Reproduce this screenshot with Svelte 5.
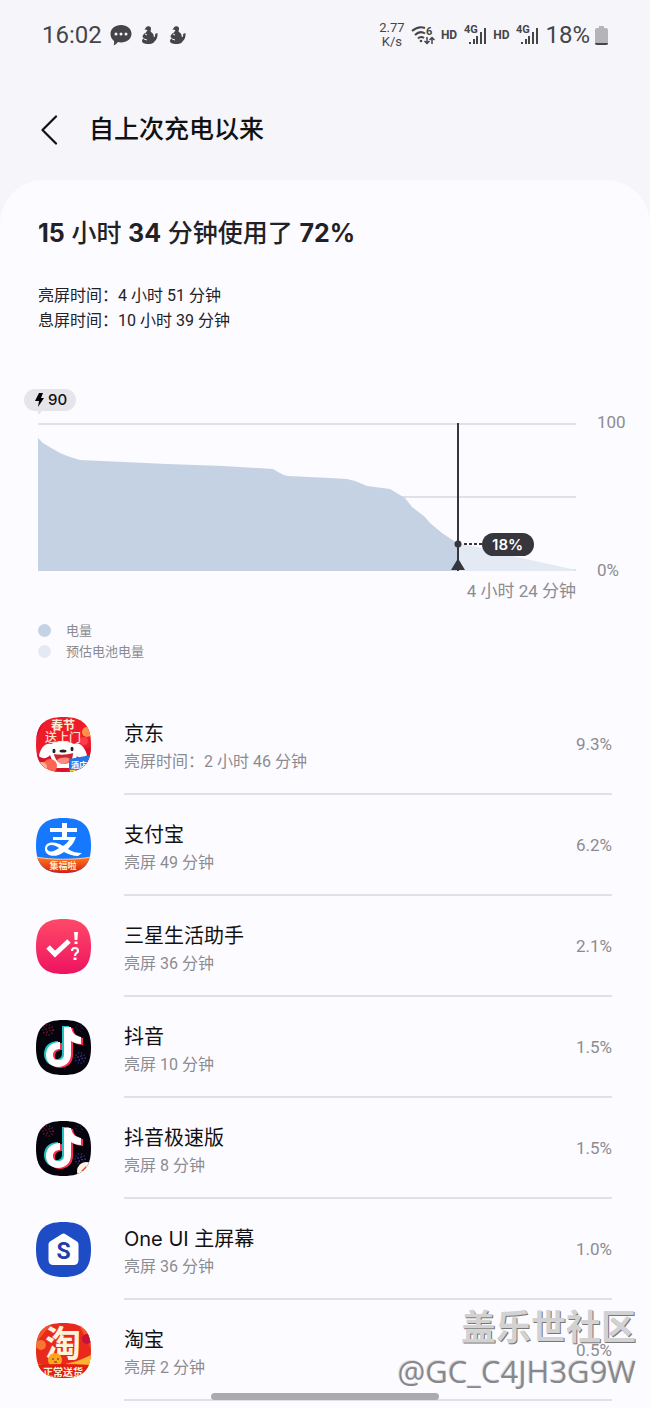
<script lang="ts">
  type App = { icon: string; name: string; detail: string; percent: string };

  const apps: App[] = [
    { icon: "jd", name: "京东", detail: "亮屏时间：2 小时 46 分钟", percent: "9.3%" },
    { icon: "alipay", name: "支付宝", detail: "亮屏 49 分钟", percent: "6.2%" },
    { icon: "assistant", name: "三星生活助手", detail: "亮屏 36 分钟", percent: "2.1%" },
    { icon: "douyin", name: "抖音", detail: "亮屏 10 分钟", percent: "1.5%" },
    { icon: "douyin-lite", name: "抖音极速版", detail: "亮屏 8 分钟", percent: "1.5%" },
    { icon: "home", name: "One UI 主屏幕", detail: "亮屏 36 分钟", percent: "1.0%" },
    { icon: "taobao", name: "淘宝", detail: "亮屏 2 分钟", percent: "0.5%" },
  ];

  const squircle = "M27.5 0C47 0 55 8 55 27.5S47 55 27.5 55 0 47 0 27.5 8 0 27.5 0z";
  const note =
    "M27 7h7c1 6 4 9 10 10v7c-4 0-7-1-10-3v13c0 8-6 13-13 13S9 42 9 35c0-8 6-13 14-13v7c-4 0-7 2-7 6 0 3 2 5 5 5 4 0 6-2 6-6z";
</script>

<svelte:head>
  <title>自上次充电以来</title>
</svelte:head>

{#snippet signal()}
  <svg class="signal" width="23" height="22" viewBox="0 0 23 22">
    <text x="0" y="9" font-size="11" font-weight="700">4G</text>
    <path d="M5 18h2v2H5zM9 15h2v5H9zM12 12h2v8h-2zM16 8h2v12h-2zM20 4h2v16h-2z" />
  </svg>
{/snippet}

{#snippet mascot()}
  <svg width="17" height="20" viewBox="0 0 17 20">
    <path
      d="M5 2.500C6 .5 10 .6 10 3.500c0 1.500-.6 2.300-.3 3.200C11.500 8 13 9 12.800 12.200c1.600-.5 1.600-2 1.200-3.200l2.500-1c.4 4-1 7-3 8.500C12.500 18.500 10 19 7 19c-3.500 0-6-1-6-3 0-1.400 1-2.200 2-2.700L1.500 12c0-2 1.500-3.500 3.500-4.500L6.500 5 3.500 4.500z"
    />
    <path d="M4 9l2 1M3 14l3 1" fill="none" stroke="#f5f5fa" />
  </svg>
{/snippet}

{#snippet appIcon(icon: string)}
  <svg class="app-icon" viewBox="0 0 55 55" aria-hidden="true">
    <defs>
      <clipPath id="clip-{icon}"><path d={squircle} /></clipPath>
      <linearGradient id="pink" x1="0" y1="0" x2="0" y2="1">
        <stop offset="0" stop-color="#ff4a68" />
        <stop offset="1" stop-color="#ee1360" />
      </linearGradient>
      <linearGradient id="orange" x1="0" y1="0" x2="0" y2="1">
        <stop offset="0" stop-color="#ff7a1c" />
        <stop offset="1" stop-color="#d91c10" />
      </linearGradient>
    </defs>
    <g clip-path="url(#clip-{icon})">
      {#if icon === "jd"}
        <rect width="55" height="55" fill="#ee1c2a" />
        <path d="M0 0h10L0 22zM55 30v25H0V38z" fill="#d9122c" />
        <circle cx="51" cy="15" r="5" fill="#ff9248" />
        <circle cx="48" cy="24" r="4" fill="#ff3b50" />
        <text x="27" y="13" text-anchor="middle" font-size="12" font-weight="700" fill="#ffe9cf">春节</text>
        <text x="27" y="25" text-anchor="middle" font-size="12" font-weight="500" fill="#ffe3cf">送上门</text>
        <path d="M15 27c6-3 17-3 23 0 5-3 11 3 13 11-3 4-8 4-10 1l-4 12H19l-5-13c-3 4-8 4-11 1 1-7 6-14 12-12z" fill="#fff" />
        <path d="M18 37c5 1 13 1 19-1 0 7-4 11-9 11s-9-4-10-10z" fill="#c9262d" />
        <path d="M21 43c4-3 10-3 13-1-2 6-10 7-13 1z" fill="#ff8a80" />
        <ellipse cx="18" cy="34" rx="1.500" ry="2.200" fill="#222" />
        <ellipse cx="36" cy="32" rx="1.500" ry="2.200" fill="#222" />
        <ellipse cx="27" cy="34" rx="3.500" ry="1.600" fill="#222" />
        <circle cx="14" cy="49" r="7" fill="#ff6550" />
        <circle cx="6" cy="50" r="5" fill="#ffb08a" />
        <path d="M33 42l22-4v17H33z" fill="#2577e8" />
        <path d="M34 53h8v2h-8z" fill="#ffd54a" />
        <text x="35" y="51" font-size="8" font-weight="700" fill="#fff">酒店</text>
      {:else if icon === "alipay"}
        <rect width="55" height="55" fill="#1677ff" />
        <path d="M14 10h12V5h5v5h10v4H31v5h9c-2 6-5 9-8 12 5 3 9 4 14 4l-4 3c-5 0-10-2-14-4-11 8-20 2-19-4 1-7 11-7 18-2 3-2 5-4 6-6H17v-3h9v-5H14zM23 30c-5-4-11-4-12 0 0 4 6 5 12 0z" fill="#fff" fill-rule="evenodd" />
        <path d="M0 39c15 3 40 3 55 0v16H0z" fill="url(#orange)" />
        <path d="M0 39c15 3 40 3 55 0" fill="none" stroke="#ffd0a0" />
        <text x="27" y="51" text-anchor="middle" font-size="9" font-weight="700" fill="#ffe8c8">集福啦</text>
      {:else if icon === "assistant"}
        <rect width="55" height="55" fill="url(#pink)" />
        <path d="M12 28l7 7 14-13" fill="none" stroke="#fff" stroke-width="5" />
        <path d="M38 13h4l-.6 8h-2.800zM38.500 22.500h3v2.500h-3zM37.500 38.500h3v2.500h-3z" fill="#fff" />
        <path d="M36 32c0-4 6-4 6 0 0 2-3 2-3 5" fill="none" stroke="#fff" stroke-width="2.200" />
      {:else if icon === "douyin" || icon === "douyin-lite"}
        <rect width="55" height="55" fill="#05040d" />
        <g fill="none" stroke-width="2" stroke-dasharray="1 2">
          <circle cx="12" cy="10" r="5" stroke="#6d1730" />
          <circle cx="12" cy="10" r="2" stroke="#6d1730" />
          <circle cx="44" cy="38" r="5" stroke="#302a78" />
          <circle cx="44" cy="38" r="2" stroke="#4a3b99" />
          <circle cx="43" cy="8" r="3" stroke="#2b1838" />
        </g>
        <path d={note} fill="#25f4ee" opacity="0.8" transform="translate(-1 -1)" />
        <path d={note} fill="#fe2c55" transform="translate(3 1)" />
        <path d={note} fill="#fff" transform="translate(1 0)" />
        {#if icon === "douyin-lite"}
          <circle cx="50" cy="50" r="9" fill="#fff0e6" />
          <path d="M45 50l5-5 1 4 2-2-3 6-2-3z" fill="#f0522f" />
        {/if}
      {:else if icon === "home"}
        <rect width="55" height="55" fill="#1d4cc4" />
        <path d="M25.500 12.200q2-1.400 4 0L41 19.500q1.500 1 1.500 3V38q0 5-5 5h-20q-5 0-5-5V22.500q0-2 1.500-3z" fill="#fff" />
        <text x="27.500" y="37" text-anchor="middle" font-size="23" font-weight="700" fill="#1d3fa8">S</text>
      {:else}
        <rect width="55" height="55" fill="#e8291c" />
        <path d="M0 20L16 0H0zM42 0h13v26z" fill="#f2552a" />
        <circle cx="5" cy="22" r="5" fill="#f77730" />
        <circle cx="51" cy="16" r="5" fill="#c2143a" />
        <path d="M0 41c18 3 35 1 55-9v12H0z" fill="#ffb52e" />
        <text x="27" y="34" text-anchor="middle" font-size="36" font-weight="700" fill="#fff3dc">淘</text>
        <circle cx="19" cy="37" r="7" fill="#ffa51e" />
        <path d="M16 36h2M21 36h2M18 39h3" stroke="#6b2a10" />
        <path d="M0 42q27-2 55 0v13H0z" fill="#e21f15" />
        <text x="27" y="53" text-anchor="middle" font-size="10" font-weight="700" fill="#fff0d8">正常送货</text>
      {/if}
    </g>
  </svg>
{/snippet}

<div class="screen">
  <div class="status">
    <span class="clock">16:02</span>
    <svg class="chat" width="22" height="22" viewBox="0 0 22 22">
      <path d="M11 1c6 0 10.500 3.800 10.500 8.700S17 18.500 11 18.500c-1 0-2-.1-3-.4C7 19.500 5.500 21 3.500 21.500c.7-1.500.8-3 .5-4.500C1.800 15.300.5 12.700.5 9.700.5 4.800 5 1 11 1z" />
      <g fill="#f5f5fa"><circle cx="6" cy="10" r="1.500" /><circle cx="11" cy="10" r="1.500" /><circle cx="16" cy="10" r="1.500" /></g>
    </svg>
    {@render mascot()}
    {@render mascot()}
    <span class="spacer"></span>
    <span class="speed">2.77<br />K/s</span>
    <svg class="wifi" width="24" height="20" viewBox="0 0 24 20">
      <g fill="none" stroke="#454548" stroke-width="2">
        <path d="M1 6C5 2.500 10 1.500 14 3M4 10c3-3 7-3.500 10-1.500M7 13.500c2-2 4-2 6-.5" />
        <path d="M16 12v6M13.500 16l2.500 2.500 2.500-2.500M21 19v-6M18.500 15l2.500-2.500 2.500 2.500" stroke-width="1.500" />
      </g>
      <circle cx="10" cy="16" r="1.300" />
      <text x="15" y="10" font-size="11" font-weight="700">6</text>
    </svg>
    <span class="hd">HD</span>
    {@render signal()}
    <span class="hd">HD</span>
    {@render signal()}
    <span class="level">18%</span>
    <svg width="13" height="19" viewBox="0 0 13 19">
      <path d="M4 0h5v2h2q2 0 2 2v13q0 2-2 2H2q-2 0-2-2V4q0-2 2-2h2z" fill="#b5b5b9" />
      <path d="M0 17h13q0 2-2 2H2q-2 0-2-2z" fill="#454548" />
    </svg>
  </div>

  <header>
    <button aria-label="返回">
      <svg width="18" height="30" viewBox="0 0 18 30">
        <path d="M16 1.500L2.500 15 16 28.500" fill="none" stroke="#111" stroke-width="2.200" stroke-linecap="round" stroke-linejoin="round" />
      </svg>
    </button>
    <h1>自上次充电以来</h1>
  </header>

  <main>
    <h2><b>15</b> 小时 <b>34</b> 分钟使用了 <b>72%</b></h2>
    <div class="times">
      <p>亮屏时间：4 小时 51 分钟</p>
      <p>息屏时间：10 小时 39 分钟</p>
    </div>

    <section class="chart">
      <div class="plot">
        <svg class="area" viewBox="0 0 538 148" preserveAspectRatio="none">
          <path d="M0 1h538M0 74h538M0 147h538" stroke="#e0e0e6" stroke-width="2" />
          <path d="M419 120L439 124 479 134 538 147V148H419z" fill="#e4eaf3" />
          <path
            d="M0 15L5 20 15 26 22 30 32 34 42 37 129 41 185 43 235 46 240 49Q245 52 250 53L292 55 309 56 317 58 329 63 352 66 367 75 374 84 387 94 392 100 404 110 419 120V148H0z"
            fill="#c4d2e4"
          />
        </svg>
        <div class="start">
          <svg width="9" height="14" viewBox="0 0 9 14"><path d="M4 0h4L6 5h3L3 14l1-6H0z" /></svg>
          90
        </div>
        <div class="marker">
          <svg width="31" height="148" viewBox="0 0 31 148">
            <path d="M7 0v148" stroke="#36363c" stroke-width="2" />
            <circle cx="7" cy="121" r="3.500" fill="#36363c" />
            <path d="M0 147l6-10q1-2 2 0l6 10z" fill="#36363c" />
            <path d="M13 121h18" stroke="#36363c" stroke-width="2" stroke-dasharray="3 2" />
          </svg>
          <span>18%</span>
        </div>
        <div class="remaining">4 小时 24 分钟</div>
      </div>
      <div class="axis"><span>100</span><span>0%</span></div>
    </section>

    <ul class="legend">
      <li><i class="used"></i>电量</li>
      <li><i></i>预估电池电量</li>
    </ul>

    <ul class="apps">
      {#each apps as app (app.icon)}
        <li>
          {@render appIcon(app.icon)}
          <div class="row">
            <div class="label">
              <h3>{app.name}</h3>
              <p>{app.detail}</p>
            </div>
            <span class="percent">{app.percent}</span>
          </div>
        </li>
      {/each}
    </ul>
  </main>

  <div class="watermark">
    <strong>盖乐世社区</strong>
    <span>@GC_C4JH3G9W</span>
  </div>
  <div class="handle"></div>
</div>

<style>
  :global(body) {
    margin: 0;
    background: #fcfbff;
  }

  .screen {
    position: relative;
    min-height: 100vh;
    background: #f5f5fa;
    color: #222226;
    font-family: Roboto, "Noto Sans CJK SC", sans-serif;
    font-size: 16px;
  }

  h1,
  h2,
  h3,
  p,
  ul {
    margin: 0;
    padding: 0;
    list-style: none;
  }

  svg {
    display: block;
    flex: none;
  }

  .status {
    display: flex;
    align-items: center;
    height: 70px;
    padding: 0 42px;
    color: #454548;
    fill: #454548;
  }

  .clock,
  .level {
    font-size: 24px;
  }

  .clock {
    margin-right: 8px;
  }

  .chat {
    margin-right: 9px;
  }

  .status svg + svg {
    margin-right: 11px;
  }

  .spacer {
    flex: 1;
  }

  .speed {
    width: 26px;
    font-size: 13px;
    line-height: 14px;
    text-align: center;
  }

  .wifi {
    margin: 0 6px;
  }

  .hd {
    font-size: 12px;
    font-weight: 700;
  }

  .signal {
    margin: 0 6px 0 7px;
  }

  .level {
    margin-right: 5px;
  }

  header {
    display: flex;
    align-items: center;
    gap: 23px;
    height: 110px;
    padding: 10px 32px 0;
    box-sizing: border-box;
  }

  button {
    display: flex;
    padding: 0 8px;
    border: 0;
    background: none;
    cursor: pointer;
  }

  h1 {
    color: #111;
    font-size: 25px;
    font-weight: 500;
    line-height: 36px;
  }

  main {
    padding: 34px 38px 7px;
    border-radius: 44px 44px 0 0;
    background: #fcfbff;
  }

  h2 {
    font-family: Inter, "Noto Sans CJK SC", sans-serif;
    font-size: 25px;
    font-weight: 500;
    line-height: 38px;
  }

  .times {
    margin: 31px 0 90px;
    line-height: 25px;
  }

  .chart {
    display: flex;
    gap: 21px;
    margin-right: -15px;
  }

  .plot {
    position: relative;
    flex: 1;
    height: 148px;
  }

  .area {
    width: 100%;
    height: 148px;
  }

  .start {
    position: absolute;
    left: -14px;
    top: -34px;
    display: flex;
    align-items: center;
    gap: 4px;
    padding: 0 9px 0 11px;
    border-radius: 11px;
    background: #e5e5ea;
    color: #111;
    font-family: Inter, sans-serif;
    font-size: 15px;
    font-weight: 500;
    line-height: 22px;
  }

  .start::after {
    content: "";
    position: absolute;
    left: 14px;
    top: 22px;
    border-top: 4px solid #e5e5ea;
    border-right: 4px solid transparent;
  }

  .marker {
    position: absolute;
    left: 78%;
    top: 0;
    display: flex;
    align-items: flex-end;
    margin-left: -7px;
  }

  .marker span {
    width: 52px;
    margin-bottom: 15px;
    border-radius: 12px;
    background: #36363c;
    color: #fff;
    font-family: Inter, sans-serif;
    font-size: 15px;
    font-weight: 600;
    line-height: 23px;
    text-align: center;
  }

  .remaining {
    position: absolute;
    right: 0;
    top: 156px;
    color: #8c8c90;
    font-size: 17px;
    line-height: 24px;
  }

  .axis {
    display: flex;
    flex-direction: column;
    justify-content: space-between;
    width: 30px;
    margin: -13px 0 -11px;
    color: #8c8c90;
    font-size: 17px;
    line-height: 24px;
  }

  .legend {
    margin: 49px 0 32px;
    color: #8c8c90;
    font-size: 13px;
    line-height: 21px;
  }

  .legend li {
    display: flex;
    align-items: center;
    gap: 15px;
  }

  .legend i {
    width: 13px;
    height: 13px;
    border-radius: 50%;
    background: #e4eaf3;
  }

  .legend .used {
    background: #c4d2e4;
  }

  .apps li {
    display: flex;
    align-items: center;
    gap: 33px;
    margin-left: -2px;
  }

  .app-icon {
    width: 55px;
    height: 55px;
  }

  .row {
    display: flex;
    flex: 1;
    align-items: center;
    justify-content: space-between;
    height: 99px;
    border-bottom: 2px solid #e0e0e6;
  }

  .label {
    padding-top: 6px;
  }

  h3 {
    color: #111;
    font-family: Inter, "Noto Sans CJK SC", sans-serif;
    font-size: 20px;
    font-weight: 400;
    line-height: 30px;
  }

  .row p {
    color: #8c8c90;
    line-height: 26px;
  }

  .percent {
    color: #8c8c90;
    font-size: 17px;
  }

  .watermark {
    position: absolute;
    right: 14px;
    bottom: 14px;
    display: flex;
    flex-direction: column;
    align-items: flex-end;
    color: #d2d2d2;
    font-family: "Open Sans", "Noto Sans CJK SC", sans-serif;
    font-size: 31px;
    line-height: 45px;
    text-shadow: 1px 1px 0 #77777a;
    pointer-events: none;
  }

  .watermark strong {
    font-size: 35px;
  }

  .watermark span {
    color: #88888b;
    text-shadow: -1px -1px 0 #dededf;
  }

  .handle {
    position: absolute;
    left: 50%;
    bottom: 8px;
    width: 228px;
    height: 7px;
    margin-left: -114px;
    border-radius: 4px;
    background: #ababaf;
  }
</style>
